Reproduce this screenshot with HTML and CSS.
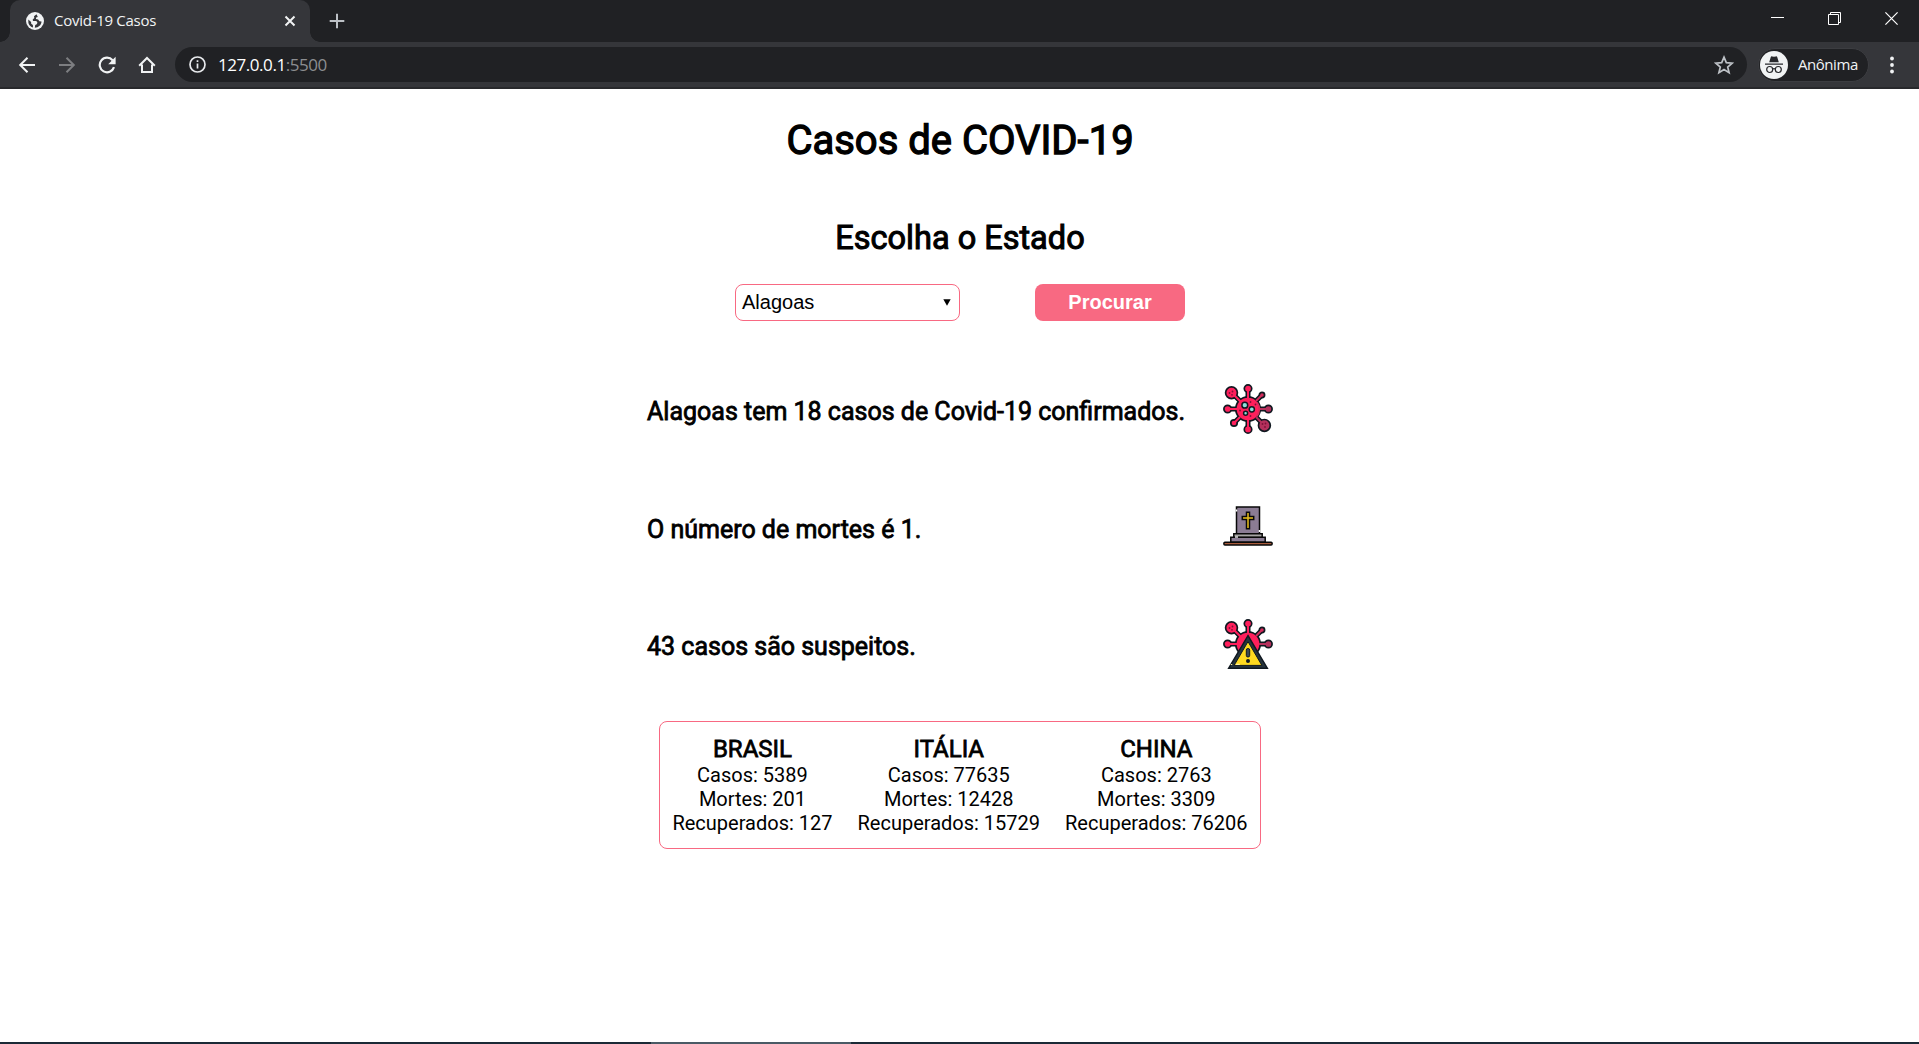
FILE: index.html
```html
<!DOCTYPE html>
<html lang="pt-BR">
<head>
<meta charset="utf-8">
<title>Covid-19 Casos</title>
<link rel="stylesheet" href="styles.css">
</head>
<body>
<header class="browser">
  <div class="tabstrip">
    <div class="tab">
      <svg class="globe" width="18" height="18" viewBox="0 0 18 18"><circle cx="9" cy="9" r="9" fill="#f1f3f4"/><path d="M10.500 2.200 8 4.200l.3 1.700L6.700 7.500 7 9h3.300l1.200 1.700-.8 1.500-1.500.7-.4 2.800c3.800 0 6.700-2.900 6.700-6.200l-2.100-.3-1.300-1.800-2.100-.4.1-1.400 1.700-.5zM2.300 7.500 2.400 11c.8 2.400 2.600 4 4.600 4.600l-.1-2.500-1.700-1.400-.1-1.700z" fill="#35363a"/></svg>
      <span class="tab-title">Covid-19 Casos</span>
      <svg class="tab-close" width="12" height="12" viewBox="0 0 12 12"><path d="m1.500 1.500 9 9m0-9-9 9" stroke="#f1f3f4" stroke-width="2"/></svg>
    </div>
    <svg class="new-tab" width="16" height="16" viewBox="0 0 16 16"><path d="M8 .7v14.600M.7 8h14.600" stroke="#bdc1c6" stroke-width="2"/></svg>
    <div class="window-buttons">
      <svg width="13" height="13" viewBox="0 0 13 13"><path d="M0 5.500h13" stroke="#fff"/></svg>
      <svg width="13" height="13" viewBox="0 0 13 13" fill="none" stroke="#fff"><path d="M.5 2.500h10v10H.5zM2.500 2.500v-2h10v10h-2"/></svg>
      <svg width="13" height="13" viewBox="0 0 13 13"><path d="m.4.4 12.200 12.200m0-12.200L.4 12.600" stroke="#fff" stroke-width="1.200"/></svg>
    </div>
  </div>
  <div class="toolbar">
    <div class="nav">
      <svg width="18" height="18" viewBox="0 0 18 18" fill="none" stroke="#f1f3f4" stroke-width="2"><path d="M17 9H2m7.500-7.300L2.200 9l7.300 7.300"/></svg>
      <svg width="18" height="18" viewBox="0 0 18 18" fill="none" stroke="#7d7e81" stroke-width="2"><path d="M1 9h15M8.500 1.700 15.800 9l-7.300 7.300"/></svg>
      <svg width="18" height="18" viewBox="0 0 18 18"><path d="M14.600 4.200A7.300 7.300 0 1 0 16 11.200" fill="none" stroke="#f1f3f4" stroke-width="2.200"/><path d="M17.600.8v7.400h-7.400z" fill="#f1f3f4"/></svg>
      <svg width="18" height="18" viewBox="0 0 18 18" fill="none" stroke="#f1f3f4" stroke-width="2"><path d="M1.200 9.800 9 2l7.800 7.800M4 8.500V16h10V8.500"/></svg>
    </div>
    <div class="address">
      <svg width="17" height="17" viewBox="0 0 17 17"><circle cx="8.500" cy="8.500" r="7.500" fill="none" stroke="#e8eaed" stroke-width="1.700"/><path d="M8.500 7.400v5M8.500 4.300v1.800" stroke="#e8eaed" stroke-width="1.700"/></svg>
      <span class="url">127.0.0.1<span class="port">:5500</span></span>
      <svg class="star" width="20" height="20" viewBox="0 0 20 20"><path d="m10 2.200 2.300 5.400 5.900.5-4.500 3.900 1.400 5.700L10 14.600l-5.100 3.100 1.400-5.700-4.500-3.900 5.900-.5z" fill="none" stroke="#bdc1c6" stroke-width="1.700"/></svg>
    </div>
    <div class="profile">
      <svg width="28" height="28" viewBox="0 0 28 28"><circle cx="14" cy="14" r="14" fill="#f1f3f4"/><path d="M9.200 11.200 10.800 6q.4-1 1.400-.6l1.800.4 1.800-.4q1-.4 1.400.6l1.600 5.200zM5 12.400h18v1.400H5z" fill="#27282c"/><g fill="none" stroke="#27282c" stroke-width="1.200"><circle cx="9.700" cy="18.500" r="3"/><circle cx="18.300" cy="18.500" r="3"/><path d="M12.700 18q1.300-.8 2.600 0"/></g></svg>
      <span>Anônima</span>
    </div>
    <svg class="more" width="4" height="18" viewBox="0 0 4 18" fill="#f1f3f4"><circle cx="2" cy="2.500" r="1.900"/><circle cx="2" cy="9" r="1.900"/><circle cx="2" cy="15.500" r="1.900"/></svg>
  </div>
</header>

<svg width="0" height="0" class="defs">
  <defs>
    <g id="virus-top">
      <path d="M25 25V6M25 25H5M25 25h20M25 25 10 10M25 25l13-13" stroke="#101820" stroke-width="5"/>
      <g fill="#ff1f5c" stroke="#101820" stroke-width="1.700">
        <circle cx="25" cy="4.600" r="3.700"/><circle cx="4.600" cy="25" r="3.700"/><circle cx="45.400" cy="25" r="3.700" fill="#b5305c"/><circle cx="8.500" cy="8.700" r="5.900"/><circle cx="39" cy="11" r="2.600" fill="#d62c5c"/><circle cx="25" cy="25" r="12.200"/>
      </g>
      <path d="M25 15V5M15 25H5M18 18 9 9" stroke="#ff1f5c" stroke-width="2"/><path d="m33 17 6-6" stroke="#d62c5c" stroke-width="1.800"/><path d="M36 25h9" stroke="#b5305c" stroke-width="2"/>
      <g fill="#7c1238"><circle cx="6.500" cy="9" r=".9"/><circle cx="9.500" cy="7.500" r=".9"/><circle cx="9" cy="10.800" r=".9"/></g>
    </g>
  </defs>
</svg>

<main class="page">
  <h1>Casos de COVID-19</h1>
  <h2>Escolha o Estado</h2>
  <div class="search">
    <div class="select"><span>Alagoas</span><svg width="8" height="7" viewBox="0 0 8 7"><path d="M.3.300h7.400L4 6.800z"/></svg></div>
    <button class="submit">Procurar</button>
  </div>
  <section class="stats">
    <div class="stat">
      <p>Alagoas tem 18 casos de Covid-19 confirmados.</p>
      <svg width="50" height="50" viewBox="0 0 50 50">
        <path d="M25 25v20M25 25 12 38M25 25l15 15" stroke="#101820" stroke-width="5"/>
        <g stroke="#101820" stroke-width="1.700"><circle cx="25" cy="45.400" r="3.700" fill="#ff1f5c"/><circle cx="11" cy="39" r="3.200" fill="#ff1f5c"/><circle cx="41.400" cy="41.400" r="5.900" fill="#b5305c"/></g>
        <use href="#virus-top"/>
        <path d="M25 35v10M17 33l-6 6" stroke="#ff1f5c" stroke-width="2"/><path d="m33 33 7 7" stroke="#b5305c" stroke-width="2"/>
        <path d="M34 18.500a11 11 0 0 1-.5 14" fill="none" stroke="#d92c5c" stroke-width="1.800"/>
        <g fill="#8de0dc" stroke="#101820" stroke-width="1.500"><circle cx="21.800" cy="21.200" r="2.900"/><circle cx="28.800" cy="25.300" r="2.600"/><circle cx="22.600" cy="29.300" r="2"/></g>
        <g fill="#7c1238"><circle cx="27.500" cy="18" r=".9"/><circle cx="32.500" cy="20.500" r=".9"/><circle cx="17" cy="26.500" r=".9"/><circle cx="27.500" cy="32" r=".9"/><circle cx="39.500" cy="40" r=".9"/><circle cx="42.500" cy="39.500" r=".9"/><circle cx="42" cy="43" r=".9"/></g>
      </svg>
    </div>
    <div class="stat">
      <p>O número de mortes é 1.</p>
      <svg width="50" height="50" viewBox="0 2 50 50">
        <g stroke="#080808" stroke-width="1.500">
          <path d="M13.500 7h23v27.500h-23z" fill="#8b7c94"/>
          <path d="M10.800 33.700h28.400v3.700H10.800z" fill="#a6a4a3"/>
          <path d="M7.800 37.200h34.400v5H7.800z" fill="#8b7c94"/>
          <rect x=".9" y="42.200" width="48.200" height="2.900" rx="1" fill="#a75b3b"/>
          <path d="M23.500 12.200h3v4.400h4.200v2.800h-4.200v9.400h-3v-9.400h-4.200v-2.800h4.200z" fill="#e9bf1d"/>
        </g>
        <path d="M12.700 10.500h1.600M35.700 31h1.600" stroke="#fff" stroke-width="1.800"/><path d="M12 37h3" stroke="#eee" stroke-width="1.400"/>
      </svg>
    </div>
    <div class="stat">
      <p>43 casos são suspeitos.</p>
      <svg width="50" height="50" viewBox="0 0 50 50">
        <use href="#virus-top"/>
        <path d="m25 16.600 19.300 32.600H5.700z" fill="#26343e" stroke="#101820" stroke-width="1.500"/>
        <path d="m25 22.600 13.900 23.800H11.100z" fill="#ffda20" stroke="#101820"/>
        <rect x="23.300" y="29.500" width="3.400" height="8.500" rx="1.600" fill="#3a4854" stroke="#101820"/><circle cx="25" cy="42" r="2" fill="#101820"/>
        <path d="M7.800 45.500h1.400M12.800 45.300h4" stroke="#fff3a0" stroke-width="1.200"/>
      </svg>
    </div>
  </section>
  <section class="countries">
    <div><h3>BRASIL</h3><p>Casos: 5389</p><p>Mortes: 201</p><p>Recuperados: 127</p></div>
    <div><h3>ITÁLIA</h3><p>Casos: 77635</p><p>Mortes: 12428</p><p>Recuperados: 15729</p></div>
    <div><h3>CHINA</h3><p>Casos: 2763</p><p>Mortes: 3309</p><p>Recuperados: 76206</p></div>
  </section>
</main>
<footer class="taskbar"><div></div></footer>
</body>
</html>
```
FILE: styles.css
```css
* { box-sizing: border-box; margin: 0; padding: 0; }
body { height: 1044px; overflow: hidden; display: flex; flex-direction: column; background: #fff; color: #000; font-family: Roboto, sans-serif; }
svg { flex: none; display: block; }
.defs { position: absolute; }
.browser { height: 89px; flex: none; background: #35363a; border-bottom: 2px solid #28292c; font-family: "Open Sans", "Noto Sans", sans-serif; color: #f1f3f4; }
.tabstrip { height: 42px; background: #202124; display: flex; align-items: center; padding-left: 10px; }
.tab { width: 300px; height: 42px; background: #35363a; border-radius: 10px 10px 0 0; display: flex; align-items: center; padding: 0 14px 0 16px; position: relative; }
.tab::before, .tab::after { content: ""; position: absolute; bottom: 0; width: 10px; height: 10px; }
.tab::before { left: -10px; background: radial-gradient(circle at 0 0, #202124 9.500px, #35363a 10px); }
.tab::after { right: -10px; background: radial-gradient(circle at 100% 0, #202124 9.500px, #35363a 10px); }
.tab-title { font-size: 15px; letter-spacing: -0.270px; margin: -2px 0 0 10px; }
.tab-close { margin-left: auto; }
.new-tab { margin-left: 19px; }
.window-buttons { margin-left: auto; display: flex; gap: 44px; padding-right: 21px; margin-bottom: 5px; }
.toolbar { height: 45px; display: flex; align-items: center; }
.nav { display: flex; gap: 22px; width: 175px; padding-left: 18px; }
.address { width: 1572px; height: 35px; background: #202124; border-radius: 18px; display: flex; align-items: center; padding: 0 13px 0 14px; }
.url { font-size: 17px; letter-spacing: -0.450px; margin: -1px 0 0 12px; color: #fff; }
.port { color: #8c8e91; }
.star { margin-left: auto; }
.profile { width: 111px; height: 34px; margin-left: 11px; border: 1px solid #3c3d41; border-radius: 17px; background: #202124; display: flex; align-items: center; padding-left: 1px; font-size: 15px; letter-spacing: -0.450px; gap: 10px; }
.profile span { margin-top: -2px; }
.more { margin-left: 21px; }
.page { flex: 1; display: flex; flex-direction: column; align-items: center; padding-left: 1px; }
h1, h2, h3, .stat p { font-weight: 400; -webkit-text-stroke: 0.032em #000; }
h1 { font-size: 40px; line-height: 48px; margin-top: 28px; }
h2 { font-size: 32.500px; line-height: 38px; margin-top: 54px; }
.search { display: flex; gap: 75px; margin-top: 27px; font-family: "Liberation Sans", Arial, sans-serif; font-size: 20px; }
.select { width: 225px; height: 37px; border: 1px solid #f86982; border-radius: 8px; display: flex; align-items: center; justify-content: space-between; padding: 0 8px 0 6px; }
.submit { width: 150px; height: 37px; border: 0; border-radius: 8px; background: #f86982; color: #fff; font: bold 20px "Liberation Sans", Arial, sans-serif; }
.stats { width: 626px; margin-top: 63px; display: grid; gap: 67.500px; }
.stat { height: 50px; display: flex; align-items: center; justify-content: space-between; }
.stat p { font-size: 25px; line-height: 30px; padding-top: 6px; }
.countries { width: 602px; height: 128px; margin-top: 52px; border: 1px solid #f86982; border-radius: 8px; display: flex; justify-content: center; gap: 25px; padding-top: 13px; text-align: center; font-size: 20px; line-height: 24px; }
.countries h3 { font-size: 24px; line-height: 28px; }
.taskbar { height: 2px; flex: none; background: #1b2a36; padding-left: 651px; }
.taskbar div { width: 200px; height: 2px; background: #4a5a65; }
```
